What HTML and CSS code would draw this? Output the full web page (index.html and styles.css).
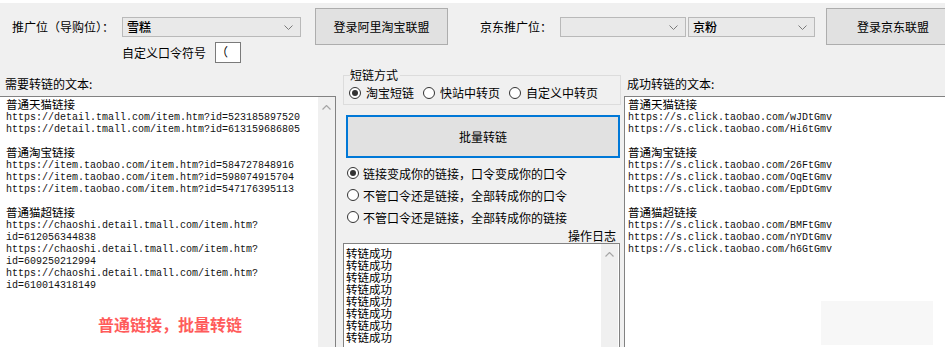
FILE: index.html
```html
<!DOCTYPE html>
<html lang="zh-CN">
<head>
<meta charset="utf-8">
<title>转链工具</title>
<link rel="stylesheet" href="styles.css">
</head>
<body>
<div class="win">
  <div class="header">
    <div class="blockA">
      <div class="row1">
        <span class="lbl lbl-tg">推广位（导购位）：</span>
        <div class="combo combo-a"><span class="ctext">雪糕</span><svg class="chev" width="9" height="5" viewBox="0 0 9 5"><polyline points="0.5,0.5 4.5,4.5 8.5,0.5" fill="none" stroke="#7a7a7a" stroke-width="1"/></svg></div>
      </div>
      <div class="row2">
        <span class="lbl">自定义口令符号</span>
        <div class="input">（</div>
      </div>
    </div>
    <div class="btn btn-ali">登录阿里淘宝联盟</div>
    <span class="lbl lbl-jd">京东推广位：</span>
    <div class="combo combo-b"><span class="ctext"></span><svg class="chev" width="9" height="5" viewBox="0 0 9 5"><polyline points="0.5,0.5 4.5,4.5 8.5,0.5" fill="none" stroke="#7a7a7a" stroke-width="1"/></svg></div>
    <div class="combo combo-c"><span class="ctext">京粉</span><svg class="chev" width="9" height="5" viewBox="0 0 9 5"><polyline points="0.5,0.5 4.5,4.5 8.5,0.5" fill="none" stroke="#7a7a7a" stroke-width="1"/></svg></div>
    <div class="btn btn-jd">登录京东联盟</div>
  </div>

  <div class="main">
    <div class="col-left">
      <div class="plabel">需要转链的文本:</div>
      <div class="tbox tbox-left">
        <div class="tcontent">
          <div class="h">普通天猫链接</div>
          <div class="u">https://detail.tmall.com/item.htm?id=523185897520</div>
          <div class="u">https://detail.tmall.com/item.htm?id=613159686805</div>
          <div class="gap"></div>
          <div class="h">普通淘宝链接</div>
          <div class="u">https://item.taobao.com/item.htm?id=584727848916</div>
          <div class="u">https://item.taobao.com/item.htm?id=598074915704</div>
          <div class="u">https://item.taobao.com/item.htm?id=547176395113</div>
          <div class="gap"></div>
          <div class="h">普通猫超链接</div>
          <div class="u">https://chaoshi.detail.tmall.com/item.htm?</div>
          <div class="u">id=612056344838</div>
          <div class="u">https://chaoshi.detail.tmall.com/item.htm?</div>
          <div class="u">id=609250212994</div>
          <div class="u">https://chaoshi.detail.tmall.com/item.htm?</div>
          <div class="u">id=610014318149</div>
          <div class="red">普通链接，批量转链</div>
        </div>
        <div class="sbar sbar-left"><svg width="9" height="5" viewBox="0 0 9 5"><polyline points="0.5,4.5 4.5,0.5 8.5,4.5" fill="none" stroke="#a6a6a6" stroke-width="1.2"/></svg></div>
      </div>
    </div>

    <div class="col-mid">
      <fieldset class="group">
        <legend>短链方式</legend>
        <div class="radios">
          <span class="ritem"><span class="rb on"></span>淘宝短链</span>
          <span class="ritem"><span class="rb"></span>快站中转页</span>
          <span class="ritem"><span class="rb"></span>自定义中转页</span>
        </div>
      </fieldset>
      <div class="bigbtn">批量转链</div>
      <div class="opts">
        <div class="opt"><span class="rb on"></span>链接变成你的链接，口令变成你的口令</div>
        <div class="opt"><span class="rb"></span>不管口令还是链接，全部转成你的口令</div>
        <div class="opt"><span class="rb"></span>不管口令还是链接，全部转成你的链接</div>
      </div>
      <div class="loglabel">操作日志</div>
      <div class="log">
        <div class="logtext">
          <div>转链成功</div>
          <div>转链成功</div>
          <div>转链成功</div>
          <div>转链成功</div>
          <div>转链成功</div>
          <div>转链成功</div>
          <div>转链成功</div>
          <div>转链成功</div>
        </div>
        <div class="sbar sbar-log"><svg width="9" height="5" viewBox="0 0 9 5"><polyline points="0.5,4.5 4.5,0.5 8.5,4.5" fill="none" stroke="#a6a6a6" stroke-width="1.2"/></svg></div>
      </div>
    </div>

    <div class="col-right">
      <div class="plabel plabel-right">成功转链的文本:</div>
      <div class="tbox tbox-right">
        <div class="tcontent tcontent-right">
          <div class="h">普通天猫链接</div>
          <div class="u">https://s.click.taobao.com/wJDtGmv</div>
          <div class="u">https://s.click.taobao.com/Hi6tGmv</div>
          <div class="gap"></div>
          <div class="h">普通淘宝链接</div>
          <div class="u">https://s.click.taobao.com/26FtGmv</div>
          <div class="u">https://s.click.taobao.com/OqEtGmv</div>
          <div class="u">https://s.click.taobao.com/EpDtGmv</div>
          <div class="gap"></div>
          <div class="h">普通猫超链接</div>
          <div class="u">https://s.click.taobao.com/BMFtGmv</div>
          <div class="u">https://s.click.taobao.com/nYDtGmv</div>
          <div class="u">https://s.click.taobao.com/h6GtGmv</div>
        </div>
        <div class="ghost"></div>
      </div>
    </div>
  </div>
</div>
</body>
</html>
```

FILE: styles.css
```css
html, body {
  margin: 0;
  padding: 0;
  background: #ffffff;
}
body {
  font-family: "Noto Sans CJK SC", "Microsoft YaHei", sans-serif;
  font-size: 12px;
  color: #000;
  padding-top: 3px;
}
.win {
  width: 945px;
  height: 344px;
  background: #f0f0f0;
  overflow: hidden;
  display: flex;
  flex-direction: column;
}

/* header */
.header {
  height: 64px;
  flex: none;
  display: flex;
  align-items: flex-start;
}
.header > * {
  flex: none;
}
.blockA {
  padding-left: 12px;
  display: flex;
  flex-direction: column;
}
.row1 {
  margin-top: 14px;
  display: flex;
  height: 20px;
}
.lbl {
  line-height: 20px;
  white-space: nowrap;
}
.lbl-tg {
  width: 110px;
  flex: none;
}
.row2 {
  margin-top: 5px;
  padding-left: 110px;
  display: flex;
  align-items: center;
}
.input {
  margin-left: 9px;
  width: 26px;
  height: 21px;
  box-sizing: border-box;
  border: 1px solid #7a7a7a;
  background: #fff;
  line-height: 18px;
  font-size: 12px;
}
.combo {
  height: 20px;
  box-sizing: border-box;
  border: 1px solid #b9b9b9;
  background: #e9e9e9;
  display: flex;
  align-items: center;
  justify-content: space-between;
  padding: 0 7px 0 4px;
  margin-top: 14px;
  flex: none;
}
.row1 .combo {
  margin-top: 0;
}
.combo-a { width: 179px; }
.combo-b { width: 126px; }
.combo-c { width: 127px; margin-left: 2px; }
.ctext {
  line-height: 18px;
  font-weight: 500;
}
.chev { flex: none; }
.btn {
  margin-top: 5px;
  height: 37px;
  box-sizing: border-box;
  border: 1px solid #adadad;
  background: #e1e1e1;
  display: flex;
  align-items: center;
  justify-content: center;
  white-space: nowrap;
}
.btn-ali {
  margin-left: 14px;
  width: 133px;
}
.lbl-jd {
  margin-left: 32px;
  margin-top: 14px;
  width: 80px;
}
.btn-jd {
  margin-left: 11px;
  width: 134px;
}

/* main */
.main {
  flex: 1;
  display: flex;
  min-height: 0;
}
.plabel {
  padding: 9px 0 0 5px;
  height: 29px;
  box-sizing: border-box;
  line-height: 16px;
  flex: none;
}
.col-left {
  width: 336px;
  flex: none;
  display: flex;
  flex-direction: column;
}
.tbox {
  flex: 1;
  background: #fff;
  border-top: 1px solid #828282;
  display: flex;
  position: relative;
}
.tbox-left {
  border-right: 1px solid #828282;
}
.tcontent {
  flex: 1;
  padding-left: 6px;
}
.h {
  font-size: 11.5px;
  line-height: 15px;
  height: 15px;
  white-space: nowrap;
}
.u {
  font-family: "Liberation Mono", "Courier New", monospace;
  font-size: 10px;
  line-height: 12px;
  height: 12px;
  white-space: nowrap;
  color: #111;
}
.gap { height: 9px; }
.red {
  margin-top: 22px;
  padding-left: 92px;
  color: #ff5b5b;
  font-size: 16px;
  font-weight: 700;
  line-height: 20px;
  white-space: nowrap;
}
.sbar {
  width: 17px;
  background: #f0f0f0;
  flex: none;
  display: flex;
  justify-content: center;
  align-items: flex-start;
}
.sbar-left { padding-top: 8px; box-sizing: border-box; }

/* middle */
.col-mid {
  margin-left: 6px;
  width: 280px;
  flex: none;
  display: flex;
  flex-direction: column;
}
.group {
  margin: 0 0 0 1px;
  padding: 0 0 1px 5px;
  border: 1px solid #dcdcdc;
  width: 278px;
  box-sizing: border-box;
  min-width: 0;
  flex: none;
}
.group legend {
  padding: 0 2px 0 0;
  margin-left: 1px;
  line-height: 16px;
  font-size: 12px;
}
.radios {
  display: flex;
  align-items: center;
  height: 20px;
}
.ritem {
  display: flex;
  align-items: center;
  gap: 5px;
  margin-right: 9px;
  white-space: nowrap;
  line-height: 20px;
}
.rb {
  width: 12px;
  height: 12px;
  box-sizing: border-box;
  border: 1px solid #333;
  border-radius: 50%;
  background: #fff;
  display: inline-flex;
  align-items: center;
  justify-content: center;
  flex: none;
}
.rb.on::after {
  content: "";
  width: 6px;
  height: 6px;
  border-radius: 50%;
  background: #333;
}
.bigbtn {
  margin: 10px 0 0 4px;
  width: 274px;
  height: 43px;
  box-sizing: border-box;
  border: 2px solid #0078d7;
  background: #e1e1e1;
  display: flex;
  align-items: center;
  justify-content: center;
  flex: none;
}
.opts {
  margin-top: 4px;
  padding-left: 5px;
  flex: none;
}
.opt {
  height: 22px;
  display: flex;
  align-items: center;
  gap: 4px;
  white-space: nowrap;
}
.loglabel {
  text-align: right;
  padding-right: 6px;
  line-height: 15px;
  height: 15px;
  flex: none;
}
.log {
  flex: 1;
  margin-left: 1px;
  width: 277px;
  box-sizing: border-box;
  border: 1px solid #828282;
  border-bottom: 0;
  background: #fff;
  display: flex;
}
.logtext {
  flex: 1;
  padding: 3px 0 0 2px;
  font-size: 11.5px;
  line-height: 12px;
}
.logtext div {
  height: 12px;
}
.sbar-log {
  margin: 0 1px 0 0;
  padding-top: 8px;
  box-sizing: border-box;
}

/* right */
.col-right {
  margin-left: 2px;
  flex: 1;
  display: flex;
  flex-direction: column;
}
.plabel-right {
  padding-left: 3px;
}
.tbox-right {
  border-left: 1px solid #828282;
}
.tcontent-right {
  padding-left: 3px;
}
.ghost {
  position: absolute;
  left: 196px;
  top: 204px;
  width: 112px;
  height: 44px;
  background: #f7f7f7;
}
```
